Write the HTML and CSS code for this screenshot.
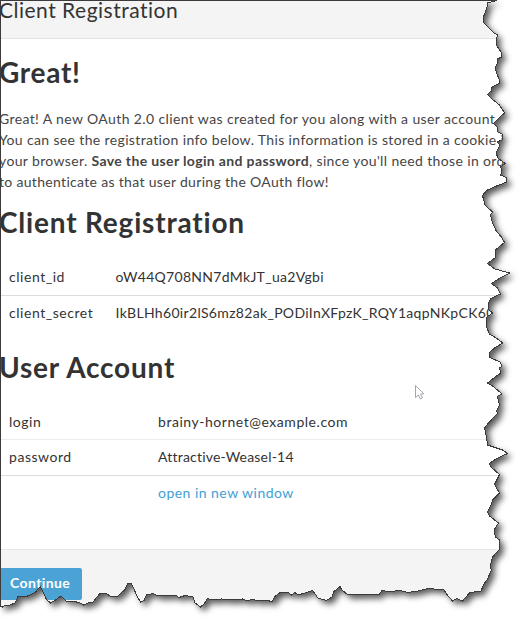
FILE: index.html
```html
<!DOCTYPE html>
<html lang="en">
<head>
<meta charset="utf-8">
<title>Client Registration</title>
<link rel="stylesheet" href="styles.css">
</head>
<body>
<div class="sheet">
  <svg class="shadow" width="531" height="629" viewBox="0 0 531 629"><use href="#torn" fill="#fff"/></svg>
  <main class="page">
    <header class="topbar">Client Registration</header>
    <section class="content">
      <h1 class="great">Great!</h1>
      <p class="intro">
        <span class="l1">Great! A new OAuth 2.0 client was created for you along with a user account.</span><br>
        <span class="l2">You can see the registration info below. This information is stored in a cookie in</span><br>
        <span class="l3">your browser. <b>Save the user login and password</b>, since you'll need those in order</span><br>
        <span class="l4">to authenticate as that user during the OAuth flow!</span>
      </p>
      <h1 class="client">Client Registration</h1>
      <dl class="grid registration">
        <div class="row"><dt>client_id</dt><dd class="cid">oW44Q708NN7dMkJT_ua2Vgbi</dd></div>
        <div class="row"><dt>client_secret</dt><dd class="secret">IkBLHh60ir2lS6mz82ak_PODiInXFpzK_RQY1aqpNKpCK60</dd></div>
      </dl>
      <h1 class="user">User Account</h1>
      <dl class="grid account">
        <div class="row light"><dt>login</dt><dd class="email">brainy-hornet@example.com</dd></div>
        <div class="row"><dt>password</dt><dd class="pass">Attractive-Weasel-14</dd></div>
        <div class="row"><dt></dt><dd><a class="link">open in new window</a></dd></div>
      </dl>
    </section>
    <footer class="actions"><button class="continue">Continue</button></footer>
  </main>
  <svg class="outline" width="531" height="629" viewBox="0 0 531 629">
    <defs>
      <path id="torn" d="M.5 .5H497L487 3 487 7 485 13 483 18 484 23 488 27 494 33 498 35 496 39 497 46 501 52 502 57 497 59 497.500 63 495 68 497 74 499.500 80 500 83 491.500 87.500 492 90.500 487.500 94.500 492.500 99.500 499.500 105 504.500 113 498.500 118.500 493.500 123.500 497 127 498 132 502 134 502 140 497 142 500 145 496 153 498 158 505 163.500 500.500 167 502 171 500.500 175 506 177.500 507 182 496.500 186 486.500 190.500 482.500 195.500 485 205 492.500 212 490.500 215 492.500 223 496.500 231.500 501.500 237 504.500 242.500 495.500 250 495 258 487.500 263.500 495 269 509.500 273 498.500 279 491.500 283.500 497.500 288 500.500 294 491 298.500 488.500 303 488 309 492.500 313 487 317 486.500 327 489.500 334 496 338 503 343 495 347.500 489.500 352.500 490 357.500 500 362 502 366 499.500 368 501 373 495 377 487.500 383 494 387 502 394 497.500 396.500 499.500 405 496.500 411 498 413 488.500 423 484.500 428 486.500 437 487.500 445 502.500 450 507.500 453.500 496 459 489.500 463.500 491 467 499.500 474.500 494.500 484.500 499.500 493 492.500 500 491 505 487.500 512 489.500 516 498.500 523 494 530 495.500 537 500 540.500 499 550 492.500 557 490 567 491.500 570 487.500 579 484 584 480.500 592 476 591.500 469.500 593 462.500 601 456.500 598.500 452.500 601 446.500 594 444 590 440 589.500 428 588.500 418 591 408 592.500 398 590 392 592 382 590.500 379 594.500 368 594.500 348 595 341.500 589.500 340 586.500 334 591.500 332 597 326.500 600.500 318 598 312.500 590.500 305 593 298 595 295 592.500 291.500 595 288 592.500 280 592.500 275 596.500 272 602 267 600 261 601 251.500 599.500 247 601 242.500 599 231.500 600 221.500 599 213 600 207.500 598.500 204 604 200.500 607 195 603 193 597 185 595.500 179 597.500 176 595.500 158 596 153 593.500 146.500 595 144 600.500 140.500 602 136.500 595 131.500 583.500 127.500 584 125 589.500 118 596 111.500 597 106.500 593.500 99.500 594 93 602 88 603 83.500 605 79 602.500 71.500 601 66 601 61 596 55 600.500 50.500 603 46.500 599.500 40.500 586.500 35 592.500 26.500 596.500 18 596.500 15 603 10 605 6 605 2.500 607 .5 606Z"/>
      <clipPath id="cut"><use href="#torn"/></clipPath>
    </defs>
    <use href="#torn" fill="none" stroke="#3d3a3b" shape-rendering="crispEdges"/>
    <path d="M415.500 385.500V397.500L418.300 395 420.300 399 422.300 398 420.500 394.200 423.800 393.800Z" fill="#fff" stroke="#9a9aa6" stroke-width=".9"/>
  </svg>
</div>
</body>
</html>
```
FILE: styles.css
```css
body { margin: 0; background: #fff; overflow: hidden; }
.sheet { position: relative; width: 531px; height: 629px; overflow: hidden; font: 14px/21px Lato, "Open Sans", sans-serif; font-variant-ligatures: none; color: #333; }
.shadow, .outline { position: absolute; left: 0; top: 0; }
.shadow { filter: drop-shadow(4px 4px 3px rgba(0, 0, 0, .65)); }
.page { position: relative; display: flex; flex-direction: column; height: 629px; background: #fff; clip-path: url(#cut); white-space: nowrap; }
.topbar { box-sizing: border-box; height: 39px; background: #f4f4f4; border-bottom: 1px solid #e4e4e4; font-size: 21px; line-height: 19px; letter-spacing: .5px; text-indent: -1px; }
.content { height: 510px; }
h1 { margin: 0; height: 36px; font-size: 28px; line-height: 36px; font-weight: 700; letter-spacing: .8px; text-indent: -1px; }
.great { padding-top: 15px; letter-spacing: .7px; }
.intro { margin: 18px 0 0 -1px; color: #454545; letter-spacing: .36px; }
.l1 { letter-spacing: .38px; }
.l4 { letter-spacing: .32px; }
.client { padding-top: 12px; }
.grid { margin: 19px 0 0; }
.row { box-sizing: border-box; display: grid; height: 36px; padding: 7px 0 0 9px; border-top: 1px solid #dcdcdc; }
.row:first-child { border-top-color: transparent; }
.row.light + .row { border-top-color: #ececec; }
.registration .row { grid-template-columns: 106.500px 1fr; }
.account .row { grid-template-columns: 149px 1fr; }
dt, dd { margin: 0; font-size: 14px; line-height: 20px; letter-spacing: .54px; }
.cid { letter-spacing: .3px; }
.secret { letter-spacing: .32px; }
.pass { letter-spacing: .2px; }
.user { padding-top: 18px; }
.account { margin-top: 18px; }
.account .light { padding-top: 8px; }
.link { color: #42a0d6; letter-spacing: .47px; }
.actions { flex: 1; background: #f4f4f4; border-top: 1px solid #e8e8e8; padding-top: 18px; }
.continue { width: 82px; height: 32px; padding: 0 0 2px 10px; border: 0; border-radius: 2px; background: #4ba3d5; color: #fff; font: 700 14px/28px Lato, sans-serif; letter-spacing: .4px; text-align: left; }
```
